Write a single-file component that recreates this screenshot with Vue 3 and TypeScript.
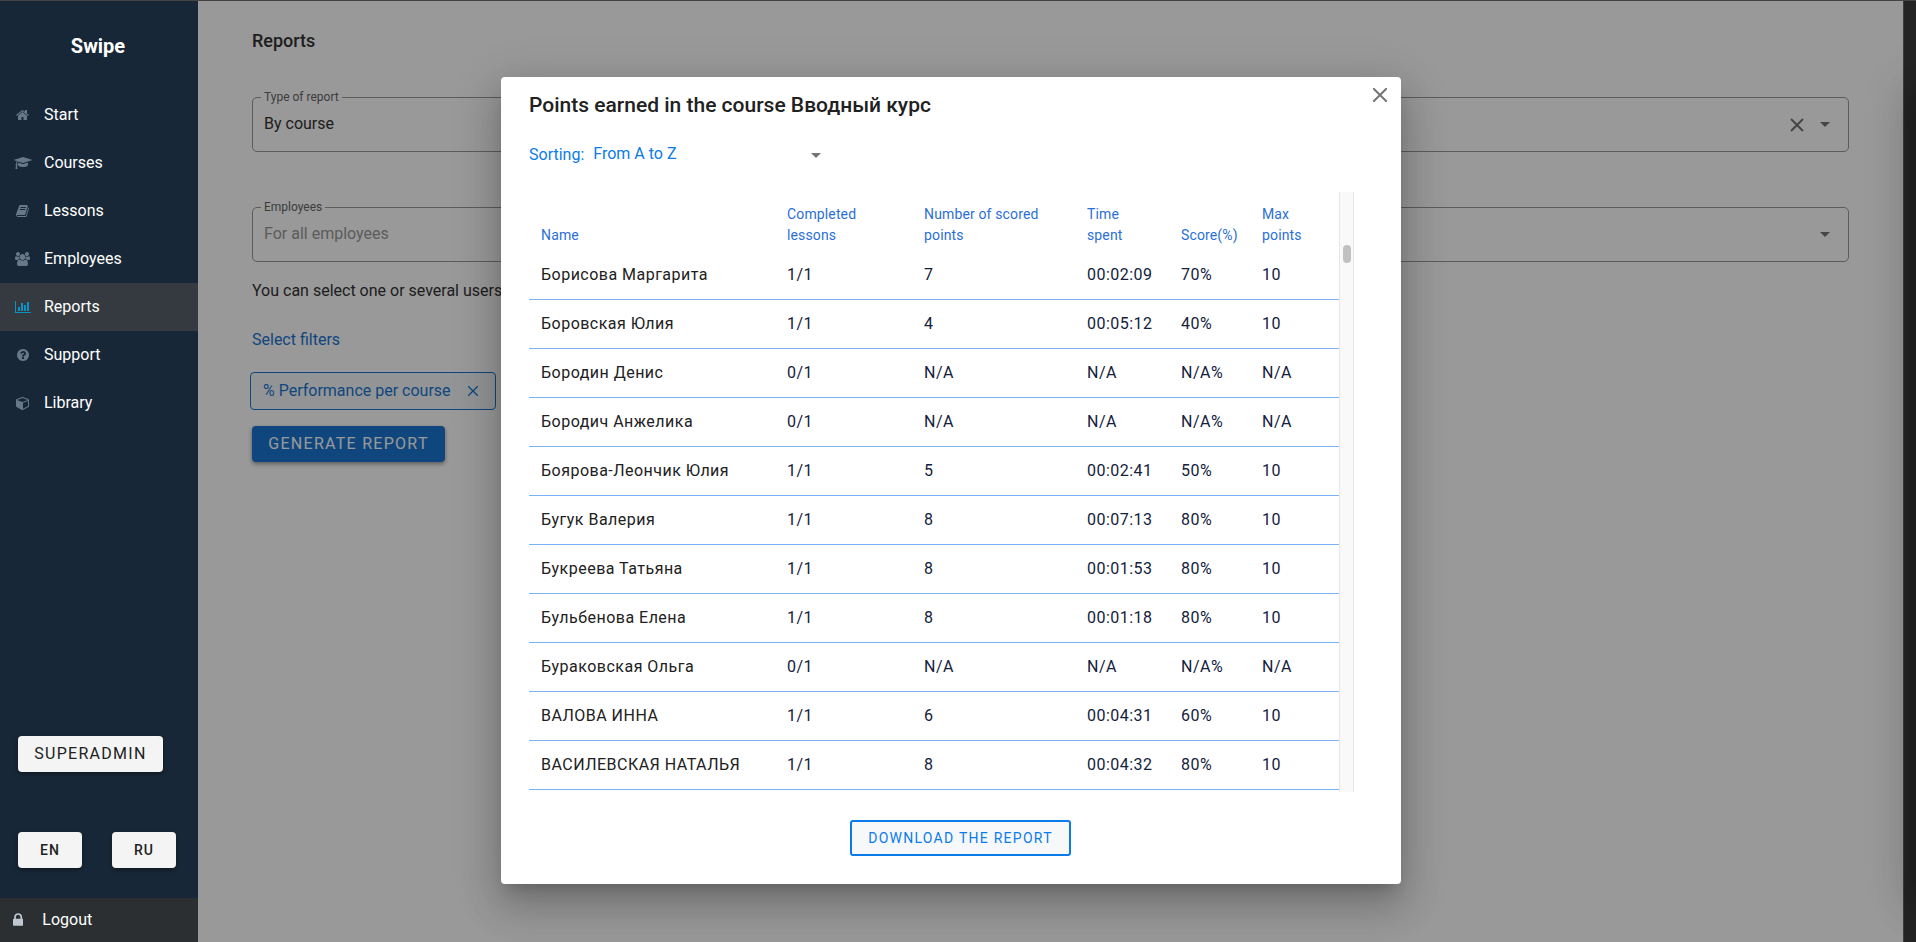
<script setup lang="ts">
import { ref } from 'vue'

interface NavItem {
  label: string
  width: number
  path: string
  active?: boolean
}

interface ResultRow {
  name: string
  lessons: string
  points: string
  time: string
  score: string
  max: string
}

const navItems: NavItem[] = [
  {
    label: 'Start',
    width: 1664,
    path: 'M1408 992v480q0 26-19 45t-45 19H960v-384H704v384H320q-26 0-45-19t-19-45V992q0-1 .5-3t.5-3l575-474 575 474q1 2 1 6zm223-69l-62 74q-8 9-21 11h-3q-13 0-21-7L832 424l-692 577q-12 8-24 7-13-2-21-11l-62-74q-8-10-7-23.500t11-21.500l719-599q32-26 76-26t76 26l244 204V288q0-14 9-23t23-9h192q14 0 23 9t9 23v408l219 182q10 8 11 21.500t-7 23.500z',
  },
  {
    label: 'Courses',
    width: 2304,
    path: 'M1774 836l18 316q4 69-82 128t-235 93.500-323 34.500-323-34.500-235-93.500-82-128l18-316 574 181q22 7 48 7t48-7zm530-324q0 23-22 31l-1120 352q-4 1-10 1t-10-1L490 690q-43 34-71 111.500T385 980q63 36 63 109 0 69-58 107l58 433q2 14-8 25-9 11-24 11H224q-15 0-24-11-10-11-8-25l58-433q-58-38-58-107 0-73 65-111 11-207 98-330L22 543q-22-8-22-31t22-31l1120-352q4-1 10-1t10 1l1120 352q22 8 22 31z',
  },
  {
    label: 'Lessons',
    width: 1664,
    path: 'M1639 478q40 57 18 129l-275 906q-19 64-76.500 107.500T1183 1664H260q-77 0-148.500-53.500T12 1479q-24-67-2-127 0-4 3-27t4-37q1-8-3-21.500t-3-19.500q2-11 8-21t16.500-23.500T52 1179q23-38 45-91.500t30-91.500q3-10 .5-30t-.5-28q3-11 17-28t17-23q21-36 42-92t25-90q1-9-2.500-32t.5-28q4-13 22-30.500t22-22.500q19-26 42.500-84.500T340 411q1-8-3-25.500t-2-26.500q2-8 9-18t18-23 17-21q8-12 16.500-30.500t15-35 16-36 19.500-32 26.500-23.500 36-11.500T556 133l-1 3q38-9 51-9h761q74 0 114 56t18 130l-274 906q-36 119-71.500 153.500T1025 1407H156q-27 0-38 15-11 16-1 43 24 70 144 70h923q29 0 56-15.500t35-41.500l300-987q7-22 5-57 38 15 59 43zM575 480q-4 13 2 22.500t20 9.500h608q13 0 25.500-9.500T1247 480l21-64q4-13-2-22.500t-20-9.500H638q-13 0-25.500 9.500T596 416zm-83 256q-4 13 2 22.500t20 9.500h608q13 0 25.500-9.500T1164 736l21-64q4-13-2-22.500t-20-9.500H555q-13 0-25.500 9.500T513 672z',
  },
  {
    label: 'Employees',
    width: 1920,
    path: 'M593 896q-162 5-265 128H194q-82 0-138-40.500T0 865q0-353 124-353 6 0 43.500 21t97.500 42.500T384 597q67 0 133-23-5 37-5 66 0 139 81 256zm1071 637q0 120-73 189.500t-194 69.500H523q-121 0-194-69.500T256 1533q0-53 3.500-103.500t14-109T300 1212t43-97.500 62-81 85.500-53.500T602 960q10 0 43 21.500t73 48 107 48 135 21.500 135-21.500 107-48 73-48 43-21.500q61 0 111.500 20t85.500 53.500 62 81 43 97.500 26.500 108.500 14 109 3.500 103.500zM640 256q0 106-75 181t-181 75-181-75-75-181 75-181T384 0t181 75 75 181zm704 384q0 159-112.500 271.500T960 1024 688.500 911.500 576 640t112.500-271.500T960 256t271.500 112.500T1344 640zm576 225q0 78-56 118.500t-138 40.500h-134q-103-123-265-128 81-117 81-256 0-29-5-66 66 23 133 23 59 0 119-21.500t97.500-42.500 43.500-21q124 0 124 353zm-128-609q0 106-75 181t-181 75-181-75-75-181 75-181 181-75 181 75 75 181z',
  },
  {
    label: 'Reports',
    width: 2048,
    path: 'M640 896v512H384V896h256zm384-512v1024H768V384h256zm1024 1152v128H0V128h128v1408h1920zm-640-896v768h-256V640h256zm384-384v1152h-256V256h256z',
    active: true,
  },
  {
    label: 'Support',
    width: 1536,
    path: 'M896 1376v-192q0-14-9-23t-23-9H672q-14 0-23 9t-9 23v192q0 14 9 23t23 9h192q14 0 23-9t9-23zm256-672q0-88-55.500-163T958 425t-170-41q-243 0-371 213-15 24 8 42l132 100q7 6 19 6 16 0 25-12 53-68 86-92 34-24 86-24 48 0 85.500 26t37.500 59q0 38-20 61t-68 45q-63 28-115.500 86.500T640 1020v36q0 14 9 23t23 9h192q14 0 23-9t9-23q0-19 21.500-49.500T972 957q32-18 49-28.500t46-35 44.500-48 28-60.500 12.500-81zm384 192q0 209-103 385.500T1153.500 1561 768 1664t-385.500-103T103 1281.500 0 896t103-385.500T382.500 231 768 128t385.500 103T1433 510.500 1536 896z',
  },
  {
    label: 'Library',
    width: 1792,
    path: 'M896 1629l640-349V644l-640 233v752zm-64-865l698-254-698-254-698 254zm832-252v768q0 35-18 65t-49 47l-704 384q-28 16-61 16t-61-16L67 1392q-31-17-49-47t-18-65V512q0-40 23-73t61-47L788 136q22-8 44-8t44 8l704 256q38 14 61 47t23 73z',
  },
]

const columns: string[] = ['Name', 'Completed lessons', 'Number of scored points', 'Time spent', 'Score(%)', 'Max points']

const rows: ResultRow[] = [
  { name: 'Борисова Маргарита', lessons: '1/1', points: '7', time: '00:02:09', score: '70%', max: '10' },
  { name: 'Боровская Юлия', lessons: '1/1', points: '4', time: '00:05:12', score: '40%', max: '10' },
  { name: 'Бородин Денис', lessons: '0/1', points: 'N/A', time: 'N/A', score: 'N/A%', max: 'N/A' },
  { name: 'Бородич Анжелика', lessons: '0/1', points: 'N/A', time: 'N/A', score: 'N/A%', max: 'N/A' },
  { name: 'Боярова-Леончик Юлия', lessons: '1/1', points: '5', time: '00:02:41', score: '50%', max: '10' },
  { name: 'Бугук Валерия', lessons: '1/1', points: '8', time: '00:07:13', score: '80%', max: '10' },
  { name: 'Букреева Татьяна', lessons: '1/1', points: '8', time: '00:01:53', score: '80%', max: '10' },
  { name: 'Бульбенова Елена', lessons: '1/1', points: '8', time: '00:01:18', score: '80%', max: '10' },
  { name: 'Бураковская Ольга', lessons: '0/1', points: 'N/A', time: 'N/A', score: 'N/A%', max: 'N/A' },
  { name: 'ВАЛОВА ИННА', lessons: '1/1', points: '6', time: '00:04:31', score: '60%', max: '10' },
  { name: 'ВАСИЛЕВСКАЯ НАТАЛЬЯ', lessons: '1/1', points: '8', time: '00:04:32', score: '80%', max: '10' },
]

const reportType = ref('By course')
const employees = ref('')
const sorting = ref('az')
</script>

<template>
  <div class="app">
    <nav class="sidebar">
      <h1 class="brand">Swipe</h1>
      <ul class="menu">
        <li v-for="item in navItems" :key="item.label">
          <a href="#" class="menu-link" :class="{ active: item.active }">
            <span class="menu-icon">
              <svg :viewBox="`0 0 ${item.width} 1792`" height="14" aria-hidden="true"><path :d="item.path" /></svg>
            </span>
            {{ item.label }}
          </a>
        </li>
      </ul>
      <div class="account">
        <button type="button" class="light-btn role">SUPERADMIN</button>
        <div class="languages">
          <button type="button" class="light-btn lang">EN</button>
          <button type="button" class="light-btn lang">RU</button>
        </div>
      </div>
      <a href="#" class="logout">
        <svg viewBox="0 0 1152 1792" height="16" aria-hidden="true">
          <path d="M320 768h512V576q0-106-75-181t-181-75-181 75-75 181v192zm832 96v576q0 40-28 68t-68 28H96q-40 0-68-28t-28-68V864q0-40 28-68t68-28h32V576q0-184 132-316t316-132 316 132 132 316v192h32q40 0 68 28t28 68z" />
        </svg>
        Logout
      </a>
    </nav>

    <main class="content">
      <h2 class="page-title">Reports</h2>
      <div class="field">
        <label for="report-type">Type of report</label>
        <input id="report-type" v-model="reportType" type="text" />
        <button type="button" class="icon-btn" aria-label="Clear">
          <svg viewBox="0 0 14 14" width="14" height="14"><path class="cross" d="M1 1l12 12M13 1L1 13" /></svg>
        </button>
        <button type="button" class="icon-btn" aria-label="Open report types">
          <svg viewBox="0 0 10 5" width="10" height="5"><path d="M0 0h10L5 5z" /></svg>
        </button>
      </div>
      <div class="field">
        <label for="employees">Employees</label>
        <input id="employees" v-model="employees" type="text" placeholder="For all employees" />
        <button type="button" class="icon-btn" aria-label="Open employees">
          <svg viewBox="0 0 10 5" width="10" height="5"><path d="M0 0h10L5 5z" /></svg>
        </button>
      </div>
      <p class="hint">You can select one or several users</p>
      <a href="#" class="filters">Select filters</a>
      <div class="chip">
        % Performance per course
        <button type="button" class="chip-close" aria-label="Remove filter">
          <svg viewBox="0 0 10 10" width="10" height="10"><path class="cross thin" d="M0 0l10 10M10 0L0 10" /></svg>
        </button>
      </div>
      <button type="button" class="generate">GENERATE REPORT</button>
    </main>

    <div class="edge"></div>

    <div class="overlay">
      <section class="dialog" role="dialog" aria-modal="true" aria-labelledby="dialog-title">
        <button type="button" class="dialog-close" aria-label="Close">
          <svg viewBox="0 0 14 14" width="14" height="14"><path class="cross" d="M0 0l14 14M14 0L0 14" /></svg>
        </button>
        <h2 id="dialog-title" class="dialog-title">Points earned in the course Вводный курс</h2>
        <div class="sorting">
          <label for="sorting">Sorting:</label>
          <span class="sort-box">
            <select id="sorting" v-model="sorting">
              <option value="az">From A to Z</option>
              <option value="za">From Z to A</option>
            </select>
            <svg viewBox="0 0 10 5" width="10" height="5" aria-hidden="true"><path d="M0 0h10L5 5z" /></svg>
          </span>
        </div>
        <div class="table-area">
          <table>
            <colgroup>
              <col class="c-name" /><col class="c-lessons" /><col class="c-points" />
              <col class="c-time" /><col class="c-score" /><col class="c-max" />
            </colgroup>
            <thead>
              <tr><th v-for="c in columns" :key="c" scope="col">{{ c }}</th></tr>
            </thead>
            <tbody>
              <tr v-for="r in rows" :key="r.name">
                <td class="name">{{ r.name }}</td>
                <td>{{ r.lessons }}</td>
                <td>{{ r.points }}</td>
                <td>{{ r.time }}</td>
                <td>{{ r.score }}</td>
                <td>{{ r.max }}</td>
              </tr>
            </tbody>
          </table>
          <div class="scrollbar"><div class="thumb"></div></div>
        </div>
        <button type="button" class="download">DOWNLOAD THE REPORT</button>
      </section>
    </div>
    <div class="drawer"></div>
  </div>
</template>

<style>
body {
  margin: 0;
}
</style>

<style scoped>
.app {
  position: relative;
  display: flex;
  box-sizing: border-box;
  min-height: 100vh;
  overflow: hidden;
  border-top: 1px solid #444;
  background: #fff;
  color: #212121;
  font: 16px/24px Roboto, sans-serif;
}
.app *,
.app *::before {
  box-sizing: border-box;
}
button,
input,
select {
  font: inherit;
  color: inherit;
  letter-spacing: inherit;
}
button {
  padding: 0;
  border: 0;
  background: none;
  cursor: pointer;
}
svg {
  fill: currentColor;
}
.cross {
  fill: none;
  stroke: currentColor;
  stroke-width: 2;
}
.thin {
  stroke-width: 1.3;
}

/* Sidebar */
.sidebar {
  position: relative;
  z-index: 2;
  display: flex;
  flex: none;
  flex-direction: column;
  width: 198px;
  background: #182737;
  color: #fff;
}
.brand {
  margin: 33px 0;
  padding-right: 2px;
  font-size: 20px;
  font-weight: 700;
  line-height: 24px;
  text-align: center;
}
.menu {
  margin: 0;
  padding: 0;
  list-style: none;
}
.menu-link {
  display: flex;
  align-items: center;
  height: 48px;
  color: #fff;
  text-decoration: none;
}
.menu-link.active {
  background: #343a40;
}
.menu-icon {
  display: flex;
  justify-content: center;
  width: 44px;
  padding-left: 1px;
  color: #677886;
}
.active .menu-icon {
  color: #0b93c4;
}
.account {
  margin: auto 18px 30px;
}
.light-btn {
  height: 36px;
  border-radius: 4px;
  background: #f4f4f4;
  color: #212121;
  box-shadow: 0 2px 4px rgba(0, 0, 0, 0.4);
}
.role {
  width: 145px;
  letter-spacing: 0.08em;
}
.languages {
  display: flex;
  gap: 30px;
  margin-top: 60px;
}
.lang {
  width: 64px;
  font-size: 14px;
  font-weight: 500;
  letter-spacing: 0.08em;
}
.logout {
  display: flex;
  align-items: center;
  gap: 19px;
  height: 44px;
  padding-left: 13px;
  background: #2b2f32;
  color: #fff;
  text-decoration: none;
}
.logout svg {
  color: #bfc7d0;
}

/* Page */
.content {
  flex: 1;
  padding: 28px 54px;
  color: #333;
}
.page-title {
  margin: 0 0 44px;
  font-size: 18px;
  font-weight: 500;
  line-height: 24px;
}
.field {
  position: relative;
  display: flex;
  align-items: center;
  height: 55px;
  margin-bottom: 55px;
  padding: 0 9px 0 0;
  border: 1px solid #999;
  border-radius: 5px;
}
.field label {
  position: absolute;
  top: -13px;
  left: 8px;
  padding: 0 3px;
  background: #fff;
  color: #666;
  font-size: 12px;
}
.field input {
  flex: 1;
  min-width: 0;
  height: 52px;
  padding: 0 11px 2px;
  border: 0;
  outline: 0;
  background: none;
}
.field input::placeholder {
  color: #999;
  opacity: 1;
}
.icon-btn {
  display: flex;
  align-items: center;
  justify-content: center;
  width: 28px;
  height: 28px;
  color: #757575;
}
.hint {
  margin: -38px 0 25px;
}
.filters {
  display: block;
  color: #1976d2;
  text-decoration: none;
}
.chip {
  display: flex;
  align-items: center;
  justify-content: space-between;
  width: 246px;
  height: 38px;
  margin: 20px 0 16px -2px;
  padding: 0 17px 1px 12px;
  border: 1px solid #1976d2;
  border-radius: 4px;
  background: #f5f7fa;
  color: #1976d2;
}
.chip-close {
  display: flex;
}
.generate {
  width: 193px;
  height: 36px;
  border-radius: 4px;
  background: #1976d2;
  color: #fff;
  letter-spacing: 0.08em;
  box-shadow: 0 2px 4px rgba(0, 0, 0, 0.4);
}
.edge {
  flex: none;
  width: 13px;
  border-left: 1px solid #666;
  background: #3c3c3c;
}

/* Dialog */
.overlay {
  position: absolute;
  inset: 0;
  z-index: 1;
  display: flex;
  align-items: center;
  justify-content: center;
  padding-right: 14px;
  background: rgba(0, 0, 0, 0.4);
}
.dialog,
.drawer {
  box-shadow: 0 11px 15px -7px rgba(0, 0, 0, 0.2), 0 24px 38px 3px rgba(0, 0, 0, 0.14), 0 9px 46px 8px rgba(0, 0, 0, 0.12);
}
.dialog {
  position: relative;
  display: flex;
  flex-direction: column;
  width: 900px;
  margin-top: 18px;
  padding: 16px 47px 28px 28px;
  border-radius: 4px;
  background: #fff;
}
.drawer {
  position: absolute;
  top: 76px;
  bottom: 58px;
  left: 100%;
  z-index: 1;
  width: 300px;
}
.dialog-close {
  position: absolute;
  top: 11px;
  right: 14px;
  display: flex;
  color: #757575;
}
.dialog-title {
  margin: 0;
  font-size: 21px;
  font-weight: 500;
  line-height: 24px;
}
.sorting {
  display: flex;
  align-items: center;
  gap: 9px;
  margin: 26px 0 25px;
  color: #0b7bea;
}
.sort-box {
  display: flex;
  align-items: center;
  width: 228px;
}
.sort-box svg {
  color: #757575;
}
.sorting select {
  flex: 1;
  padding: 0 0 2px;
  border: 0;
  outline: 0;
  background: none;
  line-height: 22px;
  appearance: none;
}
.table-area {
  display: flex;
  height: 600px;
}
table {
  flex: 1;
  align-self: flex-start;
  border-collapse: separate;
  border-spacing: 0;
  table-layout: fixed;
}
.c-name {
  width: 246px;
}
.c-lessons {
  width: 137px;
}
.c-points {
  width: 163px;
}
.c-time {
  width: 94px;
}
.c-score {
  width: 81px;
}
.c-max {
  width: 89px;
}
th {
  height: 59px;
  padding: 11px 12px 5px;
  color: #2b6fd6;
  font-size: 14px;
  font-weight: 400;
  line-height: 21px;
  letter-spacing: 0.01em;
  text-align: left;
  vertical-align: bottom;
}
td {
  height: 49px;
  padding: 0 12px;
  border-bottom: 1px solid #7ab2f8;
  color: #14213d;
  letter-spacing: 0.03em;
}
.name {
  color: #212121;
  white-space: nowrap;
}
.scrollbar {
  width: 15px;
  padding: 53px 2px 0 3px;
  border: solid #e6e6e6;
  border-width: 0 1px;
  background: #f9f9f9;
}
.thumb {
  width: 8px;
  height: 18px;
  border-radius: 4px;
  background: #c1c1c1;
}
.download {
  align-self: center;
  width: 221px;
  height: 36px;
  margin: 28px 0 0 38px;
  border: 2px solid #0b7bea;
  border-radius: 3px;
  background: #f7f8fa;
  color: #0b7bea;
  font-size: 14px;
  letter-spacing: 0.09em;
}
</style>
